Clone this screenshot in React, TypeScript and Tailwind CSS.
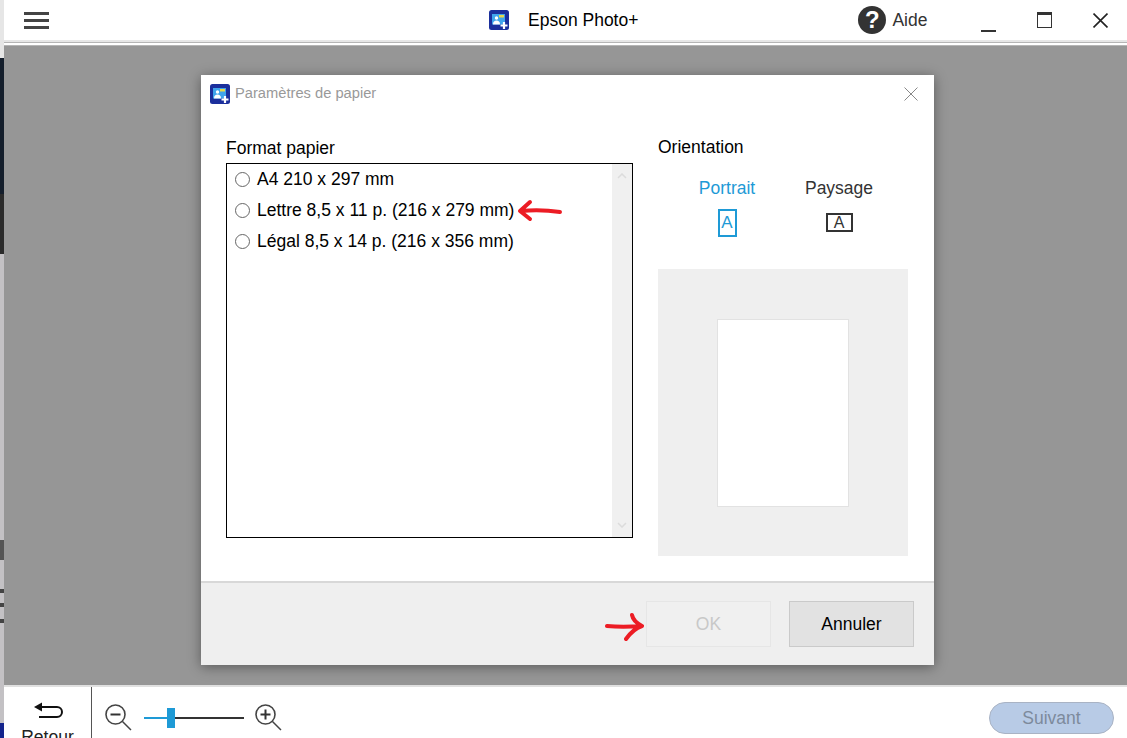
const font = "font-['Liberation_Sans',Arial,sans-serif]";

const papers = [
  "A4 210 x 297 mm",
  "Lettre 8,5 x 11 p. (216 x 279 mm)",
  "Légal 8,5 x 14 p. (216 x 356 mm)",
];

function AppIcon({ size }: { size: number }) {
  return (
    <svg width={size} height={size} viewBox="0 0 20 20">
      <rect width="20" height="20" rx="2.5" fill="#1b2f9c" />
      <rect x="3" y="4" width="13" height="10.5" fill="#3fa4ec" />
      <rect x="10" y="5" width="5" height="2.5" fill="#e8d84a" />
      <circle cx="7.5" cy="8" r="1.7" fill="#fff" />
      <path d="M4 14.5c0-3 1.5-4 3.5-4s3.5 1 3.5 4z" fill="#fff" />
      <path d="M15 12v7M11.5 15.5h7" stroke="#fff" strokeWidth="2.2" />
    </svg>
  );
}

function Magnifier({ plus }: { plus?: boolean }) {
  return (
    <svg width="28" height="28" viewBox="0 0 28 28" fill="none" stroke="#444">
      <circle cx="11.5" cy="11.5" r="9.5" strokeWidth="1.6" />
      <path d="M18.5 18.5L27 27" strokeWidth="1.5" />
      <path d="M6.5 11.5h10" strokeWidth="2" stroke="#333" />
      {plus && <path d="M11.5 6.5v10" strokeWidth="2" stroke="#333" />}
    </svg>
  );
}

function Cross({ size, color, weight }: { size: number; color: string; weight: number }) {
  return (
    <svg width={size} height={size} viewBox="0 0 14 14" fill="none" stroke={color} strokeWidth={weight}>
      <path d="M0.5 0.5L13.5 13.5M13.5 0.5L0.5 13.5" />
    </svg>
  );
}

function Radio() {
  return <span className="h-[15px] w-[15px] shrink-0 rounded-full border border-[#666] bg-white" />;
}

function RedArrow({ d, width, height }: { d: string; width: number; height: number }) {
  return (
    <svg width={width} height={height} viewBox={`0 0 ${width} ${height}`} fill="none" stroke="#ec1c24" strokeWidth="4" strokeLinecap="round" strokeLinejoin="round">
      <path d={d} />
    </svg>
  );
}

export default function App() {
  return (
    <div className={`${font} flex h-[738px] w-[1127px] overflow-hidden bg-white text-black`}>
      {/* window behind, only a sliver is visible */}
      <div className="flex w-[4px] shrink-0 flex-col bg-[#c3c1c4]">
        <div className="h-[58px] shrink-0 bg-[#e6e6e6]" />
        <div className="h-[136px] shrink-0 bg-[#141e2c]" />
        <div className="h-[60px] shrink-0 bg-[#2b2b2b]" />
        <div className="h-[286px] shrink-0" />
        <div className="h-[20px] shrink-0 bg-[#555]" />
        <div className="h-[29px] shrink-0" />
        <div className="h-[4px] shrink-0 bg-[#444]" />
        <div className="h-[10px] shrink-0" />
        <div className="h-[4px] shrink-0 bg-[#444]" />
        <div className="h-[12px] shrink-0" />
        <div className="h-[4px] shrink-0 bg-[#444]" />
        <div className="flex-1" />
        <div className="h-[15px] shrink-0 bg-[#14248c]" />
      </div>

      <div className="flex min-w-0 flex-1 flex-col">
        <header className="flex h-[40px] shrink-0 items-center">
          <div className="ml-[20px] mt-[1px] flex w-[25px] flex-col gap-[4.5px]">
            <span className="h-[2.5px] bg-[#444]" />
            <span className="h-[2.5px] bg-[#444]" />
            <span className="h-[2.5px] bg-[#444]" />
          </div>
          <div className="ml-[440px]"><AppIcon size={20} /></div>
          <span className="ml-[19px] text-[17.5px]">Epson Photo+</span>
          <div className="ml-[220px] flex h-[28px] w-[28px] items-center justify-center rounded-full bg-[#333] text-[24px] font-bold leading-none text-white">?</div>
          <span className="ml-[6px] text-[17.5px] text-[#333]">Aide</span>
          <span className="ml-[54px] mt-[22px] h-[2px] w-[15px] bg-[#333]" />
          <div className="ml-[41px] h-[16px] w-[15px] border border-t-[3px] border-[#333]" />
          <div className="ml-[41px]"><Cross size={15} color="#222" weight={1.5} /></div>
        </header>

        <div className="h-[2px] shrink-0 bg-[#e6e6e6]" />
        <div className="h-[4px] shrink-0 border-y border-[#b5b5b5] bg-white" />

        <main className="flex min-h-0 flex-1 items-start bg-[#969696] pl-[197px] pt-[29px]">
          <section className="flex h-[590px] w-[733px] flex-col bg-white shadow-[0_2px_12px_rgba(0,0,0,0.4)]">
            <div className="flex h-[37px] shrink-0 items-center pl-[9px] pr-[16px]">
              <AppIcon size={20} />
              <span className="ml-[5px] text-[14.7px] text-[#999]">Paramètres de papier</span>
              <div className="ml-auto"><Cross size={14} color="#888" weight={1} /></div>
            </div>

            <div className="flex min-h-0 flex-1 pl-[25px] pt-[26px]">
              <div className="w-[407px] shrink-0">
                <h2 className="text-[17.5px] font-normal leading-[20px]">Format papier</h2>
                <div className="mt-[5px] flex h-[375px] border border-black">
                  <ul className="flex flex-1 flex-col gap-[12px] pl-[8px] pt-[6px]">
                    {papers.map((p, i) => (
                      <li key={p} className="flex h-[19px] items-center gap-[7px] text-[17.5px]">
                        <Radio />
                        <span className="whitespace-nowrap">{p}</span>
                        {i === 1 && (
                          <span className="-ml-[5px]">
                            <RedArrow width={48} height={26} d="M4 13L14 4M4 13L14 21M5 13c12-1 25-1 39 1" />
                          </span>
                        )}
                      </li>
                    ))}
                  </ul>
                  <div className="flex w-[20px] flex-col items-center justify-between bg-[#f0f0f0] py-[9px]">
                    <svg width="10" height="6" viewBox="0 0 10 6" fill="none" stroke="#dcdcdc" strokeWidth="1.5"><path d="M1 5l4-4 4 4" /></svg>
                    <svg width="10" height="6" viewBox="0 0 10 6" fill="none" stroke="#dcdcdc" strokeWidth="1.5"><path d="M1 1l4 4 4-4" /></svg>
                  </div>
                </div>
              </div>

              <div className="ml-[25px] -mt-px flex w-[250px] flex-col">
                <h2 className="text-[17.5px] font-normal leading-[20px]">Orientation</h2>
                <div className="mt-[21px] flex pl-[41px]">
                  <div className="flex w-[56px] flex-col items-center text-[#1e9ad6]">
                    <span className="text-[17.5px] leading-[20px]">Portrait</span>
                    <div className="mt-[11px] flex h-[28px] w-[19px] items-center justify-center border-2 border-[#1e9ad6] text-[17px]">A</div>
                  </div>
                  <div className="ml-[50px] flex w-[68px] flex-col items-center text-[#333]">
                    <span className="text-[17.5px] leading-[20px]">Paysage</span>
                    <div className="mt-[15px] flex h-[19px] w-[27px] items-center justify-center border-2 border-[#333] text-[16px]">A</div>
                  </div>
                </div>
                <div className="mt-[32px] flex h-[287px] items-center justify-center bg-[#efefef]">
                  <div className="h-[188px] w-[132px] border border-[#e2e2e2] bg-white" />
                </div>
              </div>
            </div>

            <footer className="flex h-[84px] shrink-0 items-start border-t-2 border-[#d8d8d8] bg-[#efefef] pl-[403px] pt-[18px]">
              <div className="mt-[11px]">
                <RedArrow width={40} height={30} d="M3 14c10 1 22 1 35 0M28 3c1 5 4 8 10 11c-6 2-11 6-16 13" />
              </div>
              <button className="ml-[2px] h-[46px] w-[125px] border border-[#e6e6e6] bg-[#f0f0f0] text-[17.5px] text-[#c8c8c8]">OK</button>
              <button className="ml-[18px] h-[46px] w-[125px] border border-[#cacaca] bg-[#e2e2e2] text-[17.5px] text-black">Annuler</button>
            </footer>
          </section>
        </main>

        <footer className="flex h-[53px] shrink-0 items-start border-t-2 border-[#e0e0e0] bg-white">
          <div className="flex h-full w-[88px] shrink-0 flex-col items-center border-r border-[#555] pt-[15px]">
            <svg className="shrink-0" width="30" height="18" viewBox="0 0 30 18" fill="none" stroke="#111">
              <path d="M7 5h17a4.5 4.5 0 0 1 0 10H6" strokeWidth="2" />
              <path d="M1 5l8-4.5v9z" fill="#111" stroke="none" />
            </svg>
            <span className="mt-[7px] shrink-0 text-[17.5px] leading-[20px] text-[#222]">Retour</span>
          </div>
          <div className="ml-[12px] mt-[16px]"><Magnifier /></div>
          <div className="ml-[12px] mt-[21px] flex h-[20px] w-[100px] items-center">
            <span className="h-[2px] w-[23px] bg-[#1e9ad6]" />
            <span className="h-[20px] w-[8px] bg-[#1e9ad6]" />
            <span className="h-[2px] flex-1 bg-[#333]" />
          </div>
          <div className="ml-[10px] mt-[16px]"><Magnifier plus /></div>
          <button className="ml-auto mr-[13px] mt-[15px] h-[32px] w-[125px] rounded-full border border-[#a9b3c4] bg-[#b8cbe6] text-[17.5px] text-[#7d8a9c]">Suivant</button>
        </footer>
      </div>
    </div>
  );
}
